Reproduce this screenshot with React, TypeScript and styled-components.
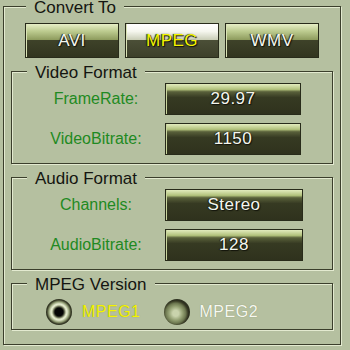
import React, { useState } from "react";
import styled, { createGlobalStyle, css } from "styled-components";

const GlobalStyle = createGlobalStyle`
  html, body {
    margin: 0;
    padding: 0;
    background: #b5c0a0;
  }
`;

const StPanel = styled.div`
  box-sizing: border-box;
  width: 350px;
  height: 350px;
  padding: 6px 0 0 3px;
  background: #b5c0a0;
  font-family: "Liberation Sans", Arial, sans-serif;
`;

const StGroup = styled.div<{ $outer?: boolean }>`
  box-sizing: border-box;
  display: flex;
  flex-direction: column;
  border: 1px solid #3b3f2c;
  box-shadow: 1px 1px 0 #e3ead0, inset 1px 1px 0 #e3ead0;
  ${({ $outer }) =>
    $outer
      ? css`
          width: 338px;
          padding: 0 7px 14px;
        `
      : css`
          margin-top: 13px;
        `}
`;

const StTitle = styled.div`
  align-self: flex-start;
  margin: -5px 0 2px 15px;
  padding: 0 8px;
  background: #b5c0a0;
  color: #141510;
  font-size: 17px;
  line-height: 12px;
  white-space: nowrap;
`;

const StConvertRow = styled.div`
  display: flex;
  justify-content: center;
  gap: 6px;
  margin-top: 7px;
`;

const buttonText = css`
  box-sizing: border-box;
  display: flex;
  align-items: center;
  justify-content: center;
  border: 1px solid #282b1a;
  font-family: "Liberation Sans", Arial, sans-serif;
  font-size: 17px;
  letter-spacing: 0.5px;
  text-shadow: 1px 1px 1px #11130a, -1px 0 1px #1b1d10;
  cursor: pointer;
  padding: 0;
`;

const StConvertButton = styled.button<{ $active?: boolean }>`
  ${buttonText};
  width: 94px;
  height: 35px;
  color: ${({ $active }) => ($active ? "#f4f400" : "#f4f6ee")};
  background: ${({ $active }) =>
    $active
      ? "linear-gradient(#ffffff 0%, #f6f7ef 22%, #c9cdb6 48%, #4b4f37 50%, #3d402a 100%)"
      : "linear-gradient(#e6eec6 0%, #bccb8f 22%, #8d9b5d 48%, #3e4229 50%, #32351f 100%)"};
  box-shadow: inset 1px 0 0 #d9e2b5;
`;

const StFieldGrid = styled.div<{ $btnWidth: number }>`
  display: grid;
  grid-template-columns: 112px ${({ $btnWidth }) => $btnWidth}px;
  column-gap: 13px;
  row-gap: 8px;
  align-items: center;
  padding: 0 0 8px 28px;
  margin-top: 2px;
`;

const StLabel = styled.span`
  text-align: center;
  color: #1f8a22;
  font-size: 16px;
  white-space: nowrap;
`;

const StValueButton = styled.button`
  ${buttonText};
  width: 100%;
  height: 32px;
  color: #f4f6ee;
  background: linear-gradient(
    #e2ebbd 0%,
    #b2c27c 18%,
    #59603a 26%,
    #363a22 45%,
    #2f321d 100%
  );
  box-shadow: inset 1px 0 0 #c9d59e;
`;

const StRadioRow = styled.div`
  display: flex;
  align-items: center;
  gap: 23px;
  padding: 0 0 4px 34px;
  margin-top: 6px;
`;

const StRadioOption = styled.label<{ $checked?: boolean }>`
  display: flex;
  align-items: center;
  gap: 10px;
  font-size: 16px;
  letter-spacing: 0.5px;
  color: ${({ $checked }) => ($checked ? "#f4f400" : "#f6f8f0")};
  text-shadow: 0 0 1px #7d865f;
  cursor: pointer;
`;

const StRadioDot = styled.span<{ $checked?: boolean }>`
  display: block;
  width: 26px;
  height: 26px;
  border-radius: 50%;
  background: ${({ $checked }) =>
    $checked
      ? "radial-gradient(circle, #050505 0 4px, #3e4230 5px, #d4dcb8 7px, #e6ecd2 8px, #9aa67c 10px, #3a3e28 12px, #2b2e1e 13px)"
      : "radial-gradient(circle at 45% 55%, #c9d3ac 0 3px, #93a072 7px, #6d7850 10px, #3e4229 12px, #2d301f 13px)"};
`;

const formats = ["AVI", "MPEG", "WMV"];
const versions = ["MPEG1", "MPEG2"];

const App = () => {
  const [format, setFormat] = useState("MPEG");
  const [version, setVersion] = useState("MPEG1");

  return (
    <StPanel>
      <GlobalStyle />
      <StGroup $outer>
        <StTitle>Convert To</StTitle>
        <StConvertRow>
          {formats.map((f) => (
            <StConvertButton
              key={f}
              $active={f === format}
              onClick={() => setFormat(f)}
            >
              {f}
            </StConvertButton>
          ))}
        </StConvertRow>

        <StGroup>
          <StTitle>Video Format</StTitle>
          <StFieldGrid $btnWidth={136}>
            <StLabel>FrameRate:</StLabel>
            <StValueButton>29.97</StValueButton>
            <StLabel>VideoBitrate:</StLabel>
            <StValueButton>1150</StValueButton>
          </StFieldGrid>
        </StGroup>

        <StGroup>
          <StTitle>Audio Format</StTitle>
          <StFieldGrid $btnWidth={138}>
            <StLabel>Channels:</StLabel>
            <StValueButton>Stereo</StValueButton>
            <StLabel>AudioBitrate:</StLabel>
            <StValueButton>128</StValueButton>
          </StFieldGrid>
        </StGroup>

        <StGroup>
          <StTitle>MPEG Version</StTitle>
          <StRadioRow>
            {versions.map((v) => (
              <StRadioOption
                key={v}
                $checked={v === version}
                onClick={() => setVersion(v)}
              >
                <StRadioDot $checked={v === version} />
                {v}
              </StRadioOption>
            ))}
          </StRadioRow>
        </StGroup>
      </StGroup>
    </StPanel>
  );
};

export default App;
